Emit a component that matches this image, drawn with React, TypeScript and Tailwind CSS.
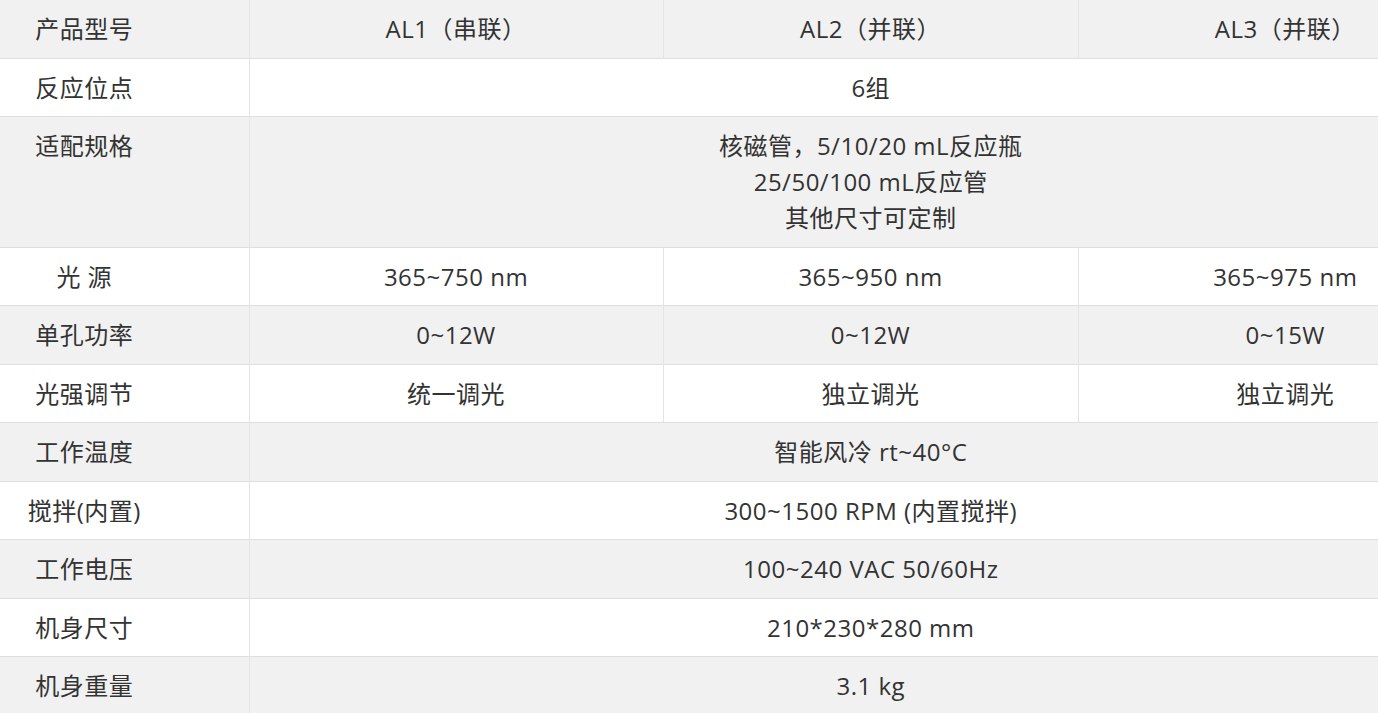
import React from "react";

type Row = { label: string; cells: string[][]; span?: boolean };

const rows: Row[] = [
  { label: "产品型号", cells: [["AL1（串联）"], ["AL2（并联）"], ["AL3（并联）"]] },
  { label: "反应位点", cells: [["6组"]], span: true },
  {
    label: "适配规格",
    cells: [["核磁管，5/10/20 mL反应瓶", "25/50/100 mL反应管", "其他尺寸可定制"]],
    span: true,
  },
  { label: "光 源", cells: [["365~750 nm"], ["365~950 nm"], ["365~975 nm"]] },
  { label: "单孔功率", cells: [["0~12W"], ["0~12W"], ["0~15W"]] },
  { label: "光强调节", cells: [["统一调光"], ["独立调光"], ["独立调光"]] },
  { label: "工作温度", cells: [["智能风冷 rt~40°C"]], span: true },
  { label: "搅拌(内置)", cells: [["300~1500 RPM (内置搅拌)"]], span: true },
  { label: "工作电压", cells: [["100~240 VAC 50/60Hz"]], span: true },
  { label: "机身尺寸", cells: [["210*230*280 mm"]], span: true },
  { label: "机身重量", cells: [["3.1 kg"]], span: true },
];

export default function App() {
  return (
    <div
      className="w-[1378px] h-[713px] overflow-hidden bg-white text-[#333333]"
      style={{ fontFamily: '"Open Sans", "Noto Sans CJK SC", sans-serif' }}
    >
      <table className="ml-[-80px] w-[1572px] table-fixed border-collapse text-[24px] leading-[36px] tracking-[0.5px]">
        <colgroup>
          <col className="w-[329px]" />
          <col className="w-[414px]" />
          <col className="w-[415px]" />
          <col className="w-[414px]" />
        </colgroup>
        <tbody>
          {rows.map((r, i) => (
            <tr
              key={i}
              className={`${i % 2 === 0 ? "bg-[#f1f1f1]" : "bg-white"} border-b border-[#dedede]`}
            >
              <td className="align-top text-center pt-[11px] pb-[10.5px] border-r border-[#e4e4e4]">
                {r.label}
              </td>
              {r.span ? (
                <td colSpan={3} className="align-top text-center pt-[11px] pb-[10.5px]">
                  {r.cells[0].map((l, k) => (
                    <div key={k}>{l}</div>
                  ))}
                </td>
              ) : (
                r.cells.map((c, j) => (
                  <td
                    key={j}
                    className={`align-top text-center pt-[11px] pb-[10.5px] ${j < 2 ? "border-r border-[#e4e4e4]" : ""}`}
                  >
                    {c.map((l, k) => (
                      <div key={k}>{l}</div>
                    ))}
                  </td>
                ))
              )}
            </tr>
          ))}
        </tbody>
      </table>
    </div>
  );
}
